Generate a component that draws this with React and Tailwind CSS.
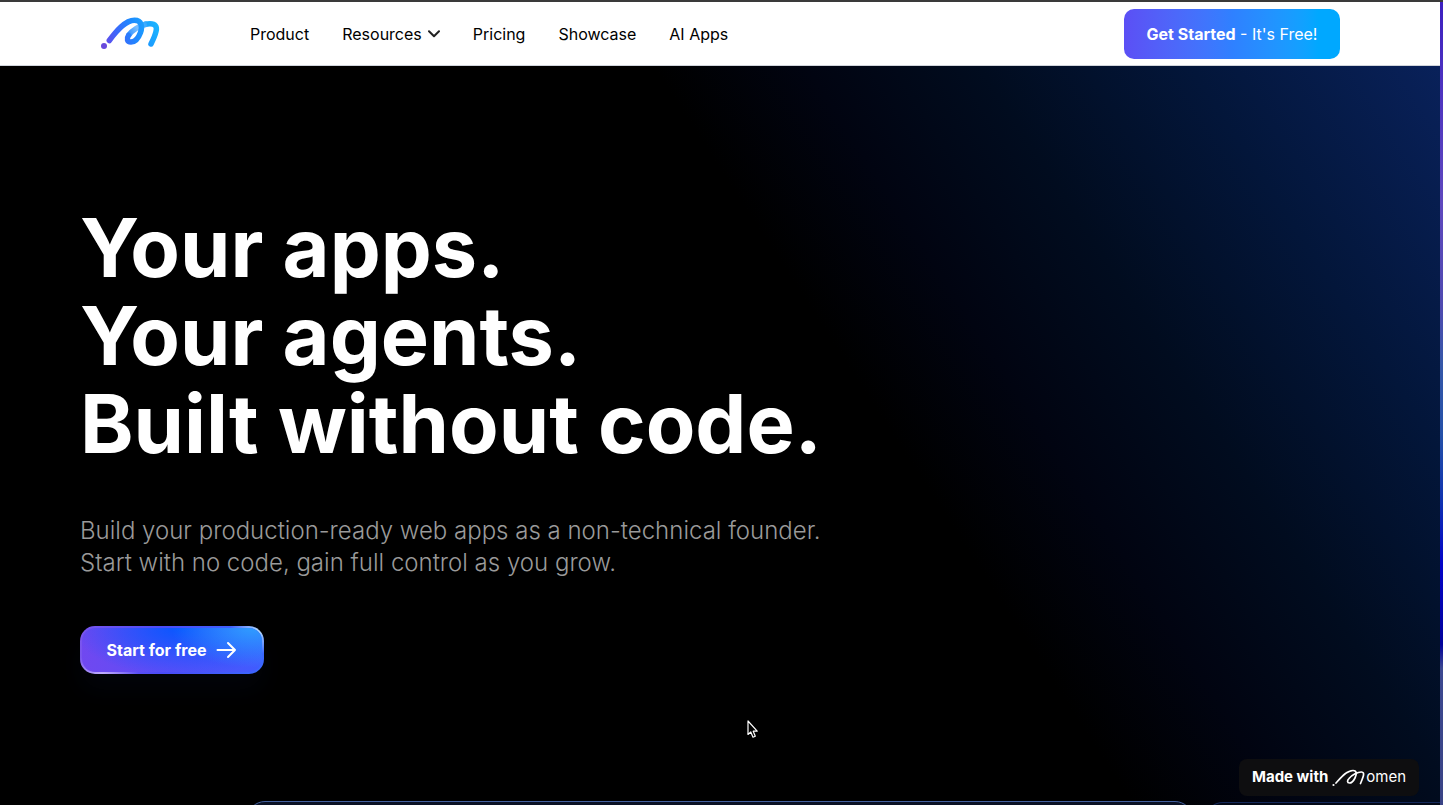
const navLink = "hover:text-blue-600";

function Logo() {
  return (
    <svg width="60" height="34" viewBox="0 0 60 34" fill="none" className="block">
      <defs>
        <linearGradient id="logo" x1="4" y1="30" x2="58" y2="10" gradientUnits="userSpaceOnUse">
          <stop offset="0" stopColor="#6a45e6" />
          <stop offset="0.3" stopColor="#3b68fb" />
          <stop offset="0.6" stopColor="#1d8bff" />
          <stop offset="1" stopColor="#1bb5ff" />
        </linearGradient>
        <linearGradient id="fold" x1="28" y1="18" x2="48" y2="7" gradientUnits="userSpaceOnUse">
          <stop offset="0" stopColor="#2a8cff" />
          <stop offset="0.5" stopColor="#7cc0ff" />
          <stop offset="1" stopColor="#2aa6ff" />
        </linearGradient>
      </defs>
      <circle cx="4" cy="29" r="3" fill="#6849dc" />
      <path d="M45 7.3C46.5 7 48 6.8 50 6.8C55.5 6.8 57.3 9.5 56 14.500C55 19 53 23 51 27" stroke="url(#logo)" strokeWidth="5.5" strokeLinecap="round" />
      <path d="M28.5 18.5C32 13 40 8.5 47 7" stroke="url(#fold)" strokeWidth="5.5" />
      <path d="M9.3 23.5C16 14.5 25 3.3 34.5 3.3C42 3.300 42.5 10 40.500 15.5C38.5 21 35 25 31 25C27 25 26.500 21.5 28.500 18.5" stroke="url(#logo)" strokeWidth="5.5" strokeLinecap="round" />
    </svg>
  );
}

function MomenMark() {
  return (
    <svg width="34" height="20" viewBox="0 0 34 20" fill="none" stroke="currentColor" strokeLinecap="round" className="block">
      <circle cx="1.5" cy="17" r="1.1" fill="currentColor" stroke="none" />
      <path d="M4 15C9 9.5 14.5 2.5 21 2.5C25.5 2.5 24.5 7 23 10C21.5 13 19.5 15 17.5 15C15 15 15 12.5 17 10.5C20 7 26 3.8 29.5 4C33.5 4.3 31 9.5 28.5 15.5" strokeWidth="1.7" />
    </svg>
  );
}

export default function App() {
  return (
    <div className="flex min-h-screen flex-col border-t-2 border-[#3a3a3a] bg-black font-['Inter',sans-serif]">
      <div className="flex flex-1">
        <div className="relative flex min-w-0 flex-1 flex-col">
          <header className="flex h-16 items-center border-b border-gray-300 bg-white px-[100px] text-black">
            <a href="#home" aria-label="Momen home" className="mr-[90px] block">
              <Logo />
            </a>
            <nav className="flex items-center gap-[33px] text-base">
              <a href="#product" className={navLink}>Product</a>
              <button type="button" className="flex items-center gap-1.5">
                Resources
                <svg width="12" height="8" viewBox="0 0 12 8" fill="none" stroke="#222222" strokeWidth="2" strokeLinecap="round" strokeLinejoin="round">
                  <path d="M1 1.2L6 6.2L11 1.2" />
                </svg>
              </button>
              <a href="#pricing" className={navLink}>Pricing</a>
              <a href="#showcase" className={navLink}>Showcase</a>
              <a href="#ai-apps" className={navLink}>AI Apps</a>
            </nav>
            <button type="button" className="ml-auto h-[50px] w-[216px] rounded-[10px] bg-linear-to-r from-[#5b4ff5] via-[#2f80ff] via-50% to-[#00a8ff] to-90% text-base whitespace-nowrap text-white">
              <strong className="font-bold">Get Started</strong> - It's Free!
            </button>
          </header>

          <main className="flex flex-1 flex-col bg-[linear-gradient(57deg,#000000_59%,#010411_67%,#010c1f_76%,#03163a_87%,#09215a_100%)] pt-[138px]">
            <div className="px-20">
              <h1 className="text-[81px] leading-[88px] font-bold text-white">
                Your apps.<br />Your agents.<br />Built without code.
              </h1>
              <p className="mt-[47px] text-2xl leading-8 font-light text-[#9a9a9a]">
                Build your production-ready web apps as a non-technical founder.<br />
                Start with no code, gain full control as you grow.
              </p>
              <button
                type="button"
                className="mt-[47px] flex h-12 w-[184px] items-center justify-center gap-2.5 rounded-[15px] border-2 border-transparent text-base font-bold text-white shadow-[0_16px_24px_#02040a] [background:radial-gradient(ellipse_45%_90%_at_95%_0%,#2f9cff,transparent)_padding-box,radial-gradient(ellipse_60%_110%_at_55%_0%,#0857ff,transparent)_padding-box,linear-gradient(90deg,#7048f0,#5a4ef8_50%,#3f5cff)_padding-box,radial-gradient(ellipse_36px_20px_at_12%_100%,#c3b0ff,transparent)_border-box,radial-gradient(ellipse_30px_24px_at_98%_8%,#b5dcff,transparent)_border-box,linear-gradient(90deg,#7a55ee,#4a4cf8_45%,#3a68ff)_border-box]"
              >
                Start for free
                <svg width="21" height="18" viewBox="0 0 21 18" fill="none" stroke="currentColor" strokeWidth="2" strokeLinecap="round" strokeLinejoin="round">
                  <path d="M1.5 9H19M12 2L19 9L12 16" />
                </svg>
              </button>
            </div>

            <section aria-label="Product previews" className="mt-auto grid h-1 grid-cols-[1fr_946px_1fr] gap-3 overflow-hidden">
              <div />
              <div className="h-16 rounded-[18px] border border-[#42609f] bg-[#0a1124]" />
              <div className="mt-px h-16 rounded-l-[18px] border border-r-0 border-[#14285a] bg-[#020817]" />
            </section>
          </main>

          <a href="#momen" className="absolute right-[21px] bottom-[9px] flex h-[37px] w-[180px] items-center justify-center rounded-lg bg-[#0e0e10] text-[15px] text-white">
            <span className="mr-1 font-bold">Made with</span>
            <MomenMark />
            <span>omen</span>
          </a>

          <svg width="12" height="19" viewBox="0 0 12 19" className="pointer-events-none absolute top-[718px] left-[747px]" fill="#000000" stroke="#ffffff" strokeWidth="1.2" strokeLinejoin="round">
            <path d="M1 1V14.5L3.8 12L6 17.2L8.3 16.2L6.2 11.2H10.2Z" />
          </svg>
        </div>
        <div className="w-[3px] bg-[linear-gradient(180deg,#3c1fc0_0%,#4a2fc0_8%,#5f48be_25%,#4f4ab0_38%,#3557a8_45%,#2450a8_54%,#1033b0_62%,#0404c8_70%,#02029a_80%,#3c4890_83%,#3a4385_100%)]" />
      </div>
    </div>
  );
}
